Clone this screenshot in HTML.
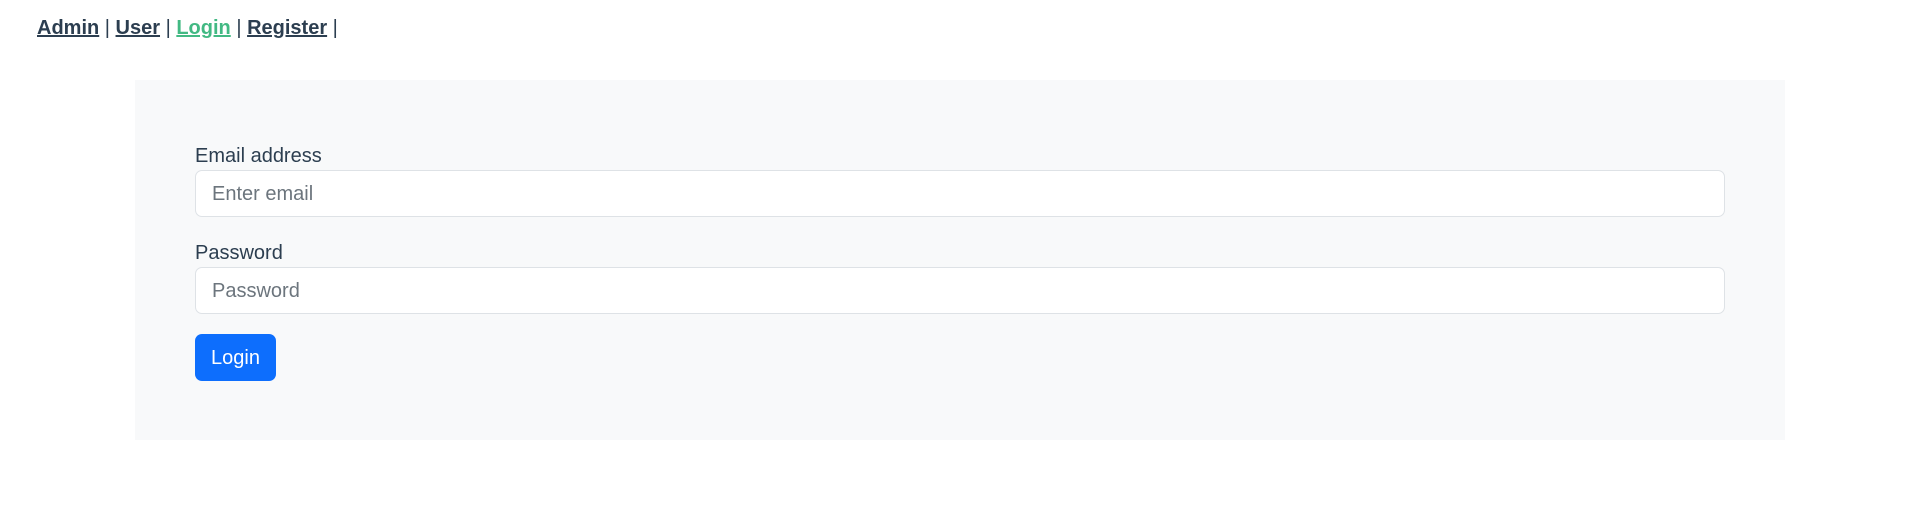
<!DOCTYPE html>
<html><head><style>
body{margin:0;background:#fff;font-family:"Liberation Sans",Arial,sans-serif;width:1917px;height:531px;overflow:hidden;position:relative}
.nav{position:absolute;left:37px;top:14px;font-size:20px;line-height:28px;color:#2c3e50}
.nav a{font-weight:bold;color:#2c3e50;text-decoration:underline}
.nav a.act{color:#42b983}
.panel{position:absolute;left:135px;top:80px;width:1650px;height:360px;background:#f8f9fa}
.lbl{position:absolute;left:195px;font-size:20px;color:#2c3e50;line-height:24px}
.inp{position:absolute;left:195px;background:#fff;border:1px solid #dee2e6;border-radius:7px;box-sizing:border-box;width:1530px;height:47px;font-size:20px;color:#6c757d;padding-left:16px;line-height:47px}
.btn{position:absolute;left:195px;top:334px;width:81px;height:47px;background:#0d6efd;color:#fff;border-radius:7px;font-size:20px;line-height:48px;text-align:center}
</style></head><body>
<div class="nav"><a>Admin</a> | <a>User</a> | <a class="act">Login</a> | <a>Register</a> |</div>
<div class="panel"></div>
<div class="lbl" style="top:144px">Email address</div>
<div class="inp" style="top:170px">Enter email</div>
<div class="lbl" style="top:241px">Password</div>
<div class="inp" style="top:267px">Password</div>
<div class="btn">Login</div>
</body></html>
